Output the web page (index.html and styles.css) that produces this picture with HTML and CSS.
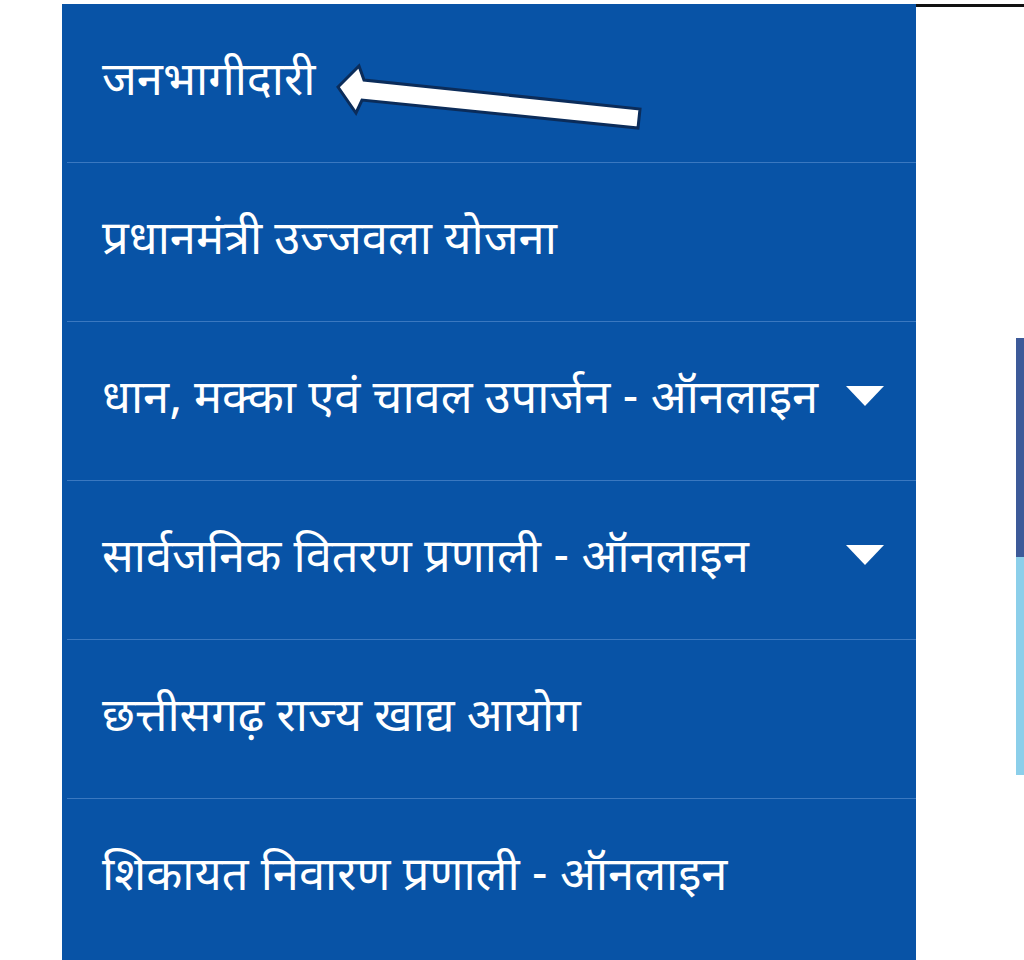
FILE: index.html
```html
<!DOCTYPE html>
<html lang="hi">
<head>
<meta charset="utf-8">
<title>मेनू</title>
<link rel="stylesheet" href="styles.css">
</head>
<body>
<div class="page">
  <nav class="menu">
    <ul class="menu-list">
      <li class="menu-item"><span class="label">जनभागीदारी</span></li>
      <li class="menu-item"><span class="label">प्रधानमंत्री उज्जवला योजना</span></li>
      <li class="menu-item"><span class="label">धान, मक्का एवं चावल उपार्जन - ऑनलाइन</span><span class="caret"></span></li>
      <li class="menu-item"><span class="label">सार्वजनिक वितरण प्रणाली - ऑनलाइन</span><span class="caret"></span></li>
      <li class="menu-item"><span class="label">छत्तीसगढ़ राज्य खाद्य आयोग</span></li>
      <li class="menu-item"><span class="label">शिकायत निवारण प्रणाली - ऑनलाइन</span></li>
    </ul>
    <svg class="pointer" width="320" height="80" viewBox="0 0 320 80" aria-hidden="true">
      <polygon points="8,32 29,11 34,25 310,54 308,73 32,45 26,58" fill="#ffffff" stroke="#0b2c5a" stroke-width="3" stroke-linejoin="miter"/>
    </svg>
  </nav>
  <aside class="side">
    <div class="share">
      <span class="share-dark"></span>
      <span class="share-light"></span>
    </div>
  </aside>
</div>
</body>
</html>
```

FILE: styles.css
```css
html, body {
  margin: 0;
  padding: 0;
  background: #ffffff;
  height: 960px;
  overflow: hidden;
}

.page {
  display: flex;
  padding: 4px 0 0 62px;
  height: 956px;
}

.menu {
  position: relative;
  width: 854px;
  flex: none;
  background: #0853a6;
  height: 100%;
}

.menu-list {
  list-style: none;
  margin: 0;
  padding: 0;
}

.menu-item {
  display: flex;
  align-items: center;
  justify-content: space-between;
  height: 158px;
  margin-left: 5px;
  padding: 0 32px 0 35px;
  border-bottom: 1px solid #3a78c0;
  color: #ffffff;
  font-family: "Noto Sans Devanagari", "Noto Sans", "Lohit Devanagari", sans-serif;
  font-size: 47px;
  line-height: 1;
}

.menu-item:last-child {
  border-bottom: none;
}

.label {
  white-space: nowrap;
}

.caret {
  flex: none;
  width: 0;
  height: 0;
  border-left: 19px solid transparent;
  border-right: 19px solid transparent;
  border-top: 20px solid #ffffff;
  margin-top: -10px;
}

.pointer {
  position: absolute;
  left: 268px;
  top: 51px;
}

.side {
  flex: 1;
  border-top: 3px solid #111111;
  display: flex;
  justify-content: flex-end;
  align-items: flex-start;
}

.share {
  display: flex;
  flex-direction: column;
  margin-top: 331px;
  width: 8px;
}

.share-dark {
  display: block;
  height: 219px;
  background: #3d5a99;
}

.share-light {
  display: block;
  height: 218px;
  background: #8ccfea;
}
```
